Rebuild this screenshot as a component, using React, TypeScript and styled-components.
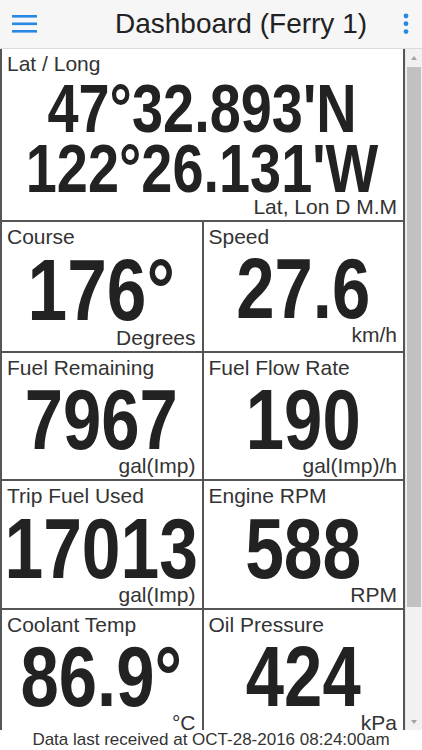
import styled, { createGlobalStyle } from "styled-components";

const GlobalStyle = createGlobalStyle`
  html, body {
    margin: 0;
    padding: 0;
    height: 100%;
    background: #ffffff;
  }
  #root {
    height: 100%;
  }
  * {
    box-sizing: border-box;
  }
`;

type Metric = {
  label: string;
  lines: string[];
  unit: string;
  size: number;
  wide?: boolean;
};

const metrics: Metric[] = [
  {
    label: "Lat / Long",
    lines: ["47°32.893'N", "122°26.131'W"],
    unit: "Lat, Lon D M.M",
    size: 69,
    wide: true,
  },
  { label: "Course", lines: ["176°"], unit: "Degrees", size: 88 },
  { label: "Speed", lines: ["27.6"], unit: "km/h", size: 85 },
  { label: "Fuel Remaining", lines: ["7967"], unit: "gal(Imp)", size: 85 },
  { label: "Fuel Flow Rate", lines: ["190"], unit: "gal(Imp)/h", size: 85 },
  { label: "Trip Fuel Used", lines: ["17013"], unit: "gal(Imp)", size: 86 },
  { label: "Engine RPM", lines: ["588"], unit: "RPM", size: 86 },
  { label: "Coolant Temp", lines: ["86.9°"], unit: "°C", size: 85 },
  { label: "Oil Pressure", lines: ["424"], unit: "kPa", size: 85 },
  { label: "Battery Voltage", lines: ["13.8"], unit: "V", size: 85 },
  { label: "Depth", lines: ["42.5"], unit: "m", size: 85 },
];

const Page = styled.div`
  height: 100vh;
  display: flex;
  flex-direction: column;
  font-family: "Liberation Sans", Arial, sans-serif;
  color: #333;
`;

const Header = styled.header`
  height: 49px;
  flex: 0 0 49px;
  display: flex;
  align-items: center;
  background: #f6f6f6;
  border-bottom: 1px solid #dadada;
`;

const MenuButton = styled.div`
  width: 48px;
  height: 48px;
  display: flex;
  align-items: center;
  padding-left: 12px;
`;

const Title = styled.h1`
  flex: 1;
  margin: 0;
  padding-left: 44px;
  text-align: center;
  font-size: 28px;
  font-weight: normal;
  line-height: 48px;
  color: #222;
  white-space: nowrap;
`;

const MoreButton = styled.div`
  width: 32px;
  height: 48px;
  display: flex;
  align-items: center;
  justify-content: center;
`;

const Body = styled.div`
  flex: 1;
  min-height: 0;
  display: flex;
`;

const Scroller = styled.main`
  flex: 1;
  min-width: 0;
  overflow: hidden;
`;

const ScrollRail = styled.div`
  width: 17px;
  flex: 0 0 17px;
  display: flex;
  flex-direction: column;
  background: #f1f1f1;
  border-left: 1px solid #e8e8e8;
`;

const ArrowButton = styled.div<{ $down?: boolean }>`
  height: 17px;
  flex: 0 0 17px;
  display: flex;
  align-items: center;
  justify-content: center;

  &::before {
    content: "";
    width: 0;
    height: 0;
    border-left: 3.5px solid transparent;
    border-right: 3.5px solid transparent;
    ${({ $down }) =>
      $down
        ? "border-top: 4px solid #a3a3a3;"
        : "border-bottom: 4px solid #a3a3a3;"}
  }
`;

const Thumb = styled.div`
  height: 540px;
  margin: 1px 1px 0 1px;
  background: #c1c1c1;
`;

const RailSpacer = styled.div`
  flex: 1;
`;

const Grid = styled.section`
  display: grid;
  grid-template-columns: 1fr 1fr;
  border-left: 2px solid #555;
`;

const Cell = styled.div<{ $wide?: boolean }>`
  grid-column: ${({ $wide }) => ($wide ? "1 / -1" : "auto")};
  display: flex;
  flex-direction: column;
  padding: 3px 6px 3px 5px;
  border-right: 2px solid #555;
  border-bottom: 2px solid #555;
  min-width: 0;
`;

const Label = styled.div`
  font-size: 21px;
  line-height: 24px;
  color: #333;
  white-space: nowrap;
`;

const Value = styled.div<{ $size: number; $wide?: boolean }>`
  margin-top: ${({ $wide }) => ($wide ? "3px" : "0")};
  font-size: ${({ $size }) => $size}px;
  line-height: ${({ $wide }) => ($wide ? "60px" : "0.93em")};
  font-weight: bold;
  color: #222;
`;

/* condensed digits: the bold face squeezed sideways */
const ValueLine = styled.div`
  display: flex;
  justify-content: center;
  white-space: nowrap;
  transform: scaleX(0.81);
`;

const Unit = styled.div<{ $wide?: boolean }>`
  margin-top: ${({ $wide }) => ($wide ? "-2px" : "-3px")};
  font-size: 21px;
  line-height: 20px;
  text-align: right;
  color: #333;
  white-space: nowrap;
`;

const Footer = styled.footer`
  height: 20px;
  flex: 0 0 20px;
  overflow: hidden;
  font-size: 17px;
  line-height: 20px;
  text-align: center;
  color: #333;
  white-space: nowrap;
`;

const BLUE = "#2689e4";

const MenuIcon = () => (
  <svg width="25" height="18" viewBox="0 0 25 18">
    <rect x="0" y="0" width="25" height="2.6" fill={BLUE} />
    <rect x="0" y="7.5" width="25" height="2.6" fill={BLUE} />
    <rect x="0" y="15" width="25" height="2.6" fill={BLUE} />
  </svg>
);

const MoreIcon = () => (
  <svg width="6" height="22" viewBox="0 0 6 22">
    <circle cx="3" cy="3" r="2.4" fill={BLUE} />
    <circle cx="3" cy="10.7" r="2.4" fill={BLUE} />
    <circle cx="3" cy="18.6" r="2.4" fill={BLUE} />
  </svg>
);

export default function App() {
  return (
    <>
      <GlobalStyle />
      <Page>
        <Header>
          <MenuButton>
            <MenuIcon />
          </MenuButton>
          <Title>Dashboard (Ferry 1)</Title>
          <MoreButton>
            <MoreIcon />
          </MoreButton>
        </Header>
        <Body>
          <Scroller>
            <Grid>
              {metrics.map((m) => (
                <Cell key={m.label} $wide={m.wide}>
                  <Label>{m.label}</Label>
                  <Value $size={m.size} $wide={m.wide}>
                    {m.lines.map((line) => (
                      <ValueLine key={line}>{line}</ValueLine>
                    ))}
                  </Value>
                  <Unit $wide={m.wide}>{m.unit}</Unit>
                </Cell>
              ))}
            </Grid>
          </Scroller>
          <ScrollRail>
            <ArrowButton />
            <Thumb />
            <RailSpacer />
            <ArrowButton $down />
          </ScrollRail>
        </Body>
        <Footer>Data last received at OCT-28-2016 08:24:00am</Footer>
      </Page>
    </>
  );
}
